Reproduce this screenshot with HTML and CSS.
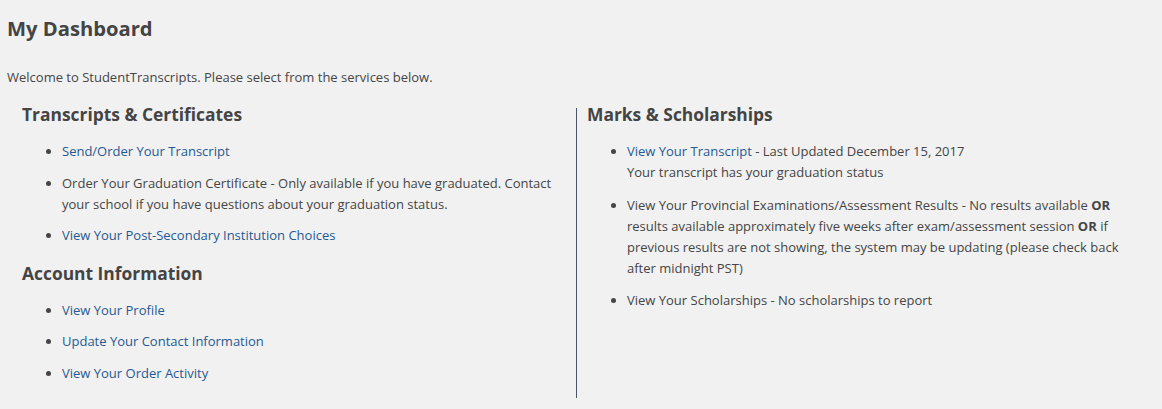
FILE: index.html
```html
<!DOCTYPE html>
<html>
<head>
<meta charset="utf-8">
<link rel="stylesheet" href="styles.css">
</head>
<body>
<div class="page">
  <h1 class="title">My Dashboard</h1>
  <p class="welcome">Welcome to StudentTranscripts. Please select from the services below.</p>
  <div class="row">
    <div class="col col-left">
      <h2 class="section-title">Transcripts &amp; Certificates</h2>
      <ul class="list">
        <li><a href="#">Send/Order Your Transcript</a></li>
        <li>Order Your Graduation Certificate - Only available if you have graduated. Contact your school if you have questions about your graduation status.</li>
        <li><a href="#">View Your Post-Secondary Institution Choices</a></li>
      </ul>
      <h2 class="section-title section-next">Account Information</h2>
      <ul class="list">
        <li><a href="#">View Your Profile</a></li>
        <li><a href="#">Update Your Contact Information</a></li>
        <li><a href="#">View Your Order Activity</a></li>
      </ul>
    </div>
    <div class="col col-right">
      <h2 class="section-title">Marks &amp; Scholarships</h2>
      <ul class="list list-right">
        <li><a href="#">View Your Transcript</a> - Last Updated December 15, 2017<br>Your transcript has your graduation status</li>
        <li>View Your Provincial Examinations/Assessment Results - No results available <b>OR</b> results available approximately five weeks after exam/assessment session <b>OR</b> if previous results are not showing, the system may be updating (please check back after midnight PST)</li>
        <li>View Your Scholarships - No scholarships to report</li>
      </ul>
    </div>
  </div>
</div>
</body>
</html>
```

FILE: styles.css
```css
html, body {
  margin: 0;
  padding: 0;
  background: #f1f1f1;
}
body {
  font-family: "Open Sans", "Liberation Sans", sans-serif;
  font-size: 13px;
  line-height: 21px;
  color: #454545;
}
.page {
  padding: 0 21px 0 7px;
}
.title {
  margin: 0;
  padding-top: 14px;
  font-size: 20.2px;
  line-height: 28px;
  font-weight: 700;
  color: #444;
}
.welcome {
  margin: 25px 0 0 0;
}
.row {
  display: flex;
  margin-top: 12px;
}
.col {
  flex: 1 1 0;
  min-width: 0;
}
.col-left {
  padding: 0 15px 4px 15px;
}
.col-right {
  border-left: 1px solid #4b5565;
  padding: 0 15px 0 10px;
  margin-top: 8px;
}
.section-title {
  margin: 0;
  font-size: 17.4px;
  line-height: 28px;
  font-weight: 700;
  color: #444;
}
.col-right .section-title {
  margin-top: -8px;
}
.section-next {
  margin-top: 12.5px;
}
.list {
  margin: 13px 0 0 0;
  padding-left: 40px;
}
.list li {
  margin-bottom: 10.5px;
}
.list-right li {
  margin-bottom: 11.5px;
}
.list a {
  color: #1f5a94;
  text-decoration: none;
}
.list b {
  font-weight: 700;
}
```
